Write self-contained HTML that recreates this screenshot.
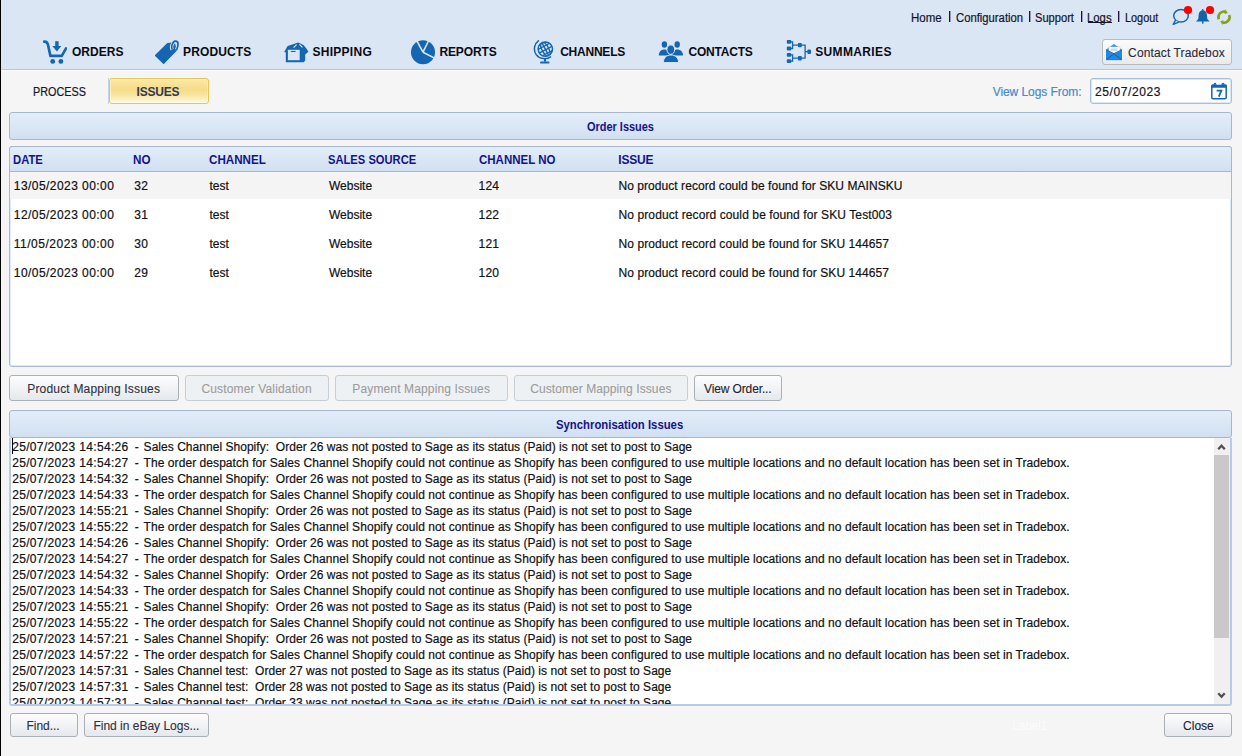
<!DOCTYPE html>
<html><head><meta charset="utf-8">
<style>
*{box-sizing:border-box;margin:0;padding:0}
html,body{width:1242px;height:756px;overflow:hidden;background:#f5f5f5;font-family:"Liberation Sans",sans-serif;font-size:12px;position:relative}
.a{position:absolute}
.t{position:absolute;white-space:pre;font-size:12px;line-height:12px;color:#111;-webkit-text-stroke:.2px currentColor}
.hdr{left:0;top:0;width:1242px;height:69px;background:#dae6f3}
.hline{left:0;top:69px;width:1242px;height:1px;background:#c2c4c6}
.hline2{left:0;top:70px;width:1242px;height:1px;background:#fbfbfb}
.lbar{left:0;top:0;width:1px;height:756px;background:#000}
.bar{background:linear-gradient(#e2edf9,#d1e0f1);border:1px solid #a6b6cd;border-radius:3px}
.btn{background:linear-gradient(#fdfdfe,#e5e8ec);border:1px solid #abb0b6;border-radius:3px}
.dis{background:#eef1f4;border:1px solid #c8ced5;border-radius:3px}
.sep{width:1px;background:#20103a;box-shadow:1px 0 0 rgba(40,20,70,.35)}
</style></head><body>
<div class="a hdr"></div>
<div class="a hline"></div>
<div class="a hline2"></div>

<!-- top separators -->
<div class="a sep" style="left:949px;top:11px;height:11px"></div>
<div class="a sep" style="left:1029px;top:11px;height:11px"></div>
<div class="a sep" style="left:1081px;top:11px;height:11px"></div>
<div class="a sep" style="left:1118px;top:11px;height:11px"></div>
<div class="a" style="left:1088px;top:22px;width:24px;height:1px;background:#15152a"></div>

<!-- top right icons -->
<svg class="a" style="left:1170px;top:4px" width="70" height="24" viewBox="0 0 70 24">
  <ellipse cx="11" cy="11.8" rx="7.3" ry="6.3" fill="none" stroke="#1566b2" stroke-width="1.5"/>
  <path d="M5.6 16.2L3.2 20.4L8.8 18.2" fill="#dae6f3" stroke="#1566b2" stroke-width="1.4" stroke-linejoin="round"/>
  <circle cx="18" cy="6" r="4.1" fill="#f00"/>
  <path d="M32.7 6.2c-2.6 0-3.9 2.4-4.1 5.2l-.3 3.6L26 17.4h13.6l-2.3-2.4-.3-3.6c-.2-2.8-1.5-5.2-4.3-5.2z" fill="#1262ac"/>
  <rect x="32" y="5" width="1.4" height="1.8" rx=".5" fill="#1262ac"/>
  <rect x="32" y="17.2" width="1.5" height="2.4" fill="#1262ac"/>
  <circle cx="40" cy="6" r="4.1" fill="#f00"/>
  <path d="M48.81 15.20A5.6 5.6 0 0 1 55.16 7.62" fill="none" stroke="#86a01e" stroke-width="2.6"/>
  <path d="M54.56 9.95L55.39 5.22L57.75 8.94z" fill="#86a01e"/>
  <path d="M59.19 11.00A5.6 5.6 0 0 1 52.84 18.58" fill="none" stroke="#86a01e" stroke-width="2.6"/>
  <path d="M53.44 16.25L52.61 20.98L50.25 17.26z" fill="#86a01e"/>
</svg>

<!-- nav icons -->
<svg class="a" style="left:43px;top:40px" width="24" height="24" viewBox="0 0 24 24">
  <path d="M1.2 1.6C3.4 1.4 4.4 2.3 4.9 4.4L7.4 15.9H18.8L23 8.3" fill="none" stroke="#1566b2" stroke-width="2.6" stroke-linecap="round" stroke-linejoin="round"/>
  <rect x="12.2" y="1.2" width="3.4" height="5.4" fill="#1566b2"/>
  <path d="M9.3 6.1H18.3L13.9 11.4z" fill="#1566b2"/>
  <circle cx="9.7" cy="21.4" r="2.4" fill="#1566b2"/>
  <circle cx="17.9" cy="21.4" r="2.4" fill="#1566b2"/>
</svg>
<svg class="a" style="left:155px;top:40px" width="26" height="25" viewBox="0 0 26 25">
  <path d="M0.6 15.6L12.8 3.6L19.2 3L21.2 10.2L8.6 23.2Z" fill="#1566b2" stroke="#1566b2" stroke-width="1.4" stroke-linejoin="round"/>
  <path d="M17.2 9.6C15.6 7 17.6 1.4 20.4 1.2C23.4 1 24 4.6 21.6 9.8" fill="none" stroke="#dae6f3" stroke-width="3.4"/>
  <path d="M17.2 9.6C15.6 7 17.6 1.4 20.4 1.2C23.4 1 24 4.6 21.6 9.8" fill="none" stroke="#1566b2" stroke-width="1.7"/>
</svg>
<svg class="a" style="left:284px;top:40px" width="26" height="24" viewBox="0 0 26 24">
  <path d="M0.2 12L3.6 6L9 4.2L14.2 2.6L19.5 5L22.4 8.6L24.4 11.8L21.2 14.5V20.6L19.8 22.2H1.8V12.6Z" fill="#1566b2"/>
  <rect x="3.9" y="9.8" width="11.8" height="10.4" fill="#dae6f3"/>
  <rect x="6.8" y="10.9" width="4.8" height="1.1" fill="#1566b2"/>
  <path d="M9.6 7.6L12.6 4.6M15.4 4.4L18.4 7.4" stroke="#dae6f3" stroke-width="1.1"/>
</svg>
<svg class="a" style="left:411px;top:40px" width="25" height="25" viewBox="0 0 25 25">
  <circle cx="12" cy="12.2" r="12" fill="#1566b2"/>
  <path d="M12.0 12.2L5.80 0.78" stroke="#dae6f3" stroke-width="1.6"/><path d="M12.0 12.2L17.70 0.52" stroke="#dae6f3" stroke-width="1.6"/><path d="M12.0 12.2L23.58 18.10" stroke="#dae6f3" stroke-width="1.6"/>
</svg>
<svg class="a" style="left:533px;top:40px" width="22" height="25" viewBox="0 0 22 25">
  <defs><clipPath id="gc"><circle cx="12.3" cy="9.1" r="7"/></clipPath></defs>
  <circle cx="12.3" cy="9.1" r="7.4" fill="#1566b2"/>
  <g clip-path="url(#gc)" transform="rotate(-28 12.3 9.1)">
    <g fill="#dae6f3">
      <rect x="5" y="3.2" width="15" height="2.2"/>
      <rect x="5" y="6.6" width="15" height="2.6"/>
      <rect x="5" y="10.4" width="15" height="2.6"/>
      <rect x="5" y="14.2" width="15" height="2.2"/>
    </g>
    <ellipse cx="12.3" cy="9.1" rx="3.4" ry="8" fill="none" stroke="#1566b2" stroke-width="1.4"/>
    <rect x="11.6" y="0" width="1.4" height="18" fill="#1566b2"/>
  </g>
  <circle cx="12.3" cy="9.1" r="7.2" fill="none" stroke="#1566b2" stroke-width="1.5"/>
  <path d="M5.9 0.4C1.6 3.4 -0.2 9.6 3.2 14.6C6.6 19.4 13.6 19.8 18 16.6" fill="none" stroke="#1566b2" stroke-width="1.5"/>
  <rect x="11" y="18" width="2" height="3.6" fill="#1566b2"/>
  <rect x="7.2" y="21.4" width="9.2" height="2.2" rx=".5" fill="#1566b2"/>
</svg>
<svg class="a" style="left:658px;top:40px" width="26" height="24" viewBox="0 0 26 24">
  <ellipse cx="6.4" cy="4.5" rx="2.7" ry="3.2" fill="#1566b2"/>
  <path d="M0.8 15.4C0.8 11.5 3.2 9.4 6.4 9.4C9.6 9.4 12 11.5 12 15.4z" fill="#1566b2"/>
  <ellipse cx="19.2" cy="4.5" rx="2.7" ry="3.2" fill="#1566b2"/>
  <path d="M13.6 15.4C13.6 11.5 16 9.4 19.2 9.4C22.4 9.4 25 11.5 25 15.4z" fill="#1566b2"/>
  <ellipse cx="12.8" cy="9.6" rx="3.9" ry="4.7" fill="#1566b2" stroke="#dae6f3" stroke-width="1"/>
  <path d="M5.4 22.6C5.4 17.6 8.6 15 12.9 15C17.2 15 20.6 17.6 20.6 22.6z" fill="#1566b2" stroke="#dae6f3" stroke-width="1"/>
</svg>
<svg class="a" style="left:786px;top:40px" width="26" height="25" viewBox="0 0 26 25">
  <path d="M4 1.8H6.6V8.5H4M6.6 5.1H12.5M4 14.8H6.6V21.1H4M6.6 18.2H12.5M15 5.1H19.1V18.2H15M19.1 11.6H22" fill="none" stroke="#1566b2" stroke-width="1.3"/>
  <g fill="#1566b2">
  <rect x="0.8" y="-0.1" width="4.4" height="3.9" rx="1"/>
  <rect x="0.8" y="6.6" width="4.4" height="3.9" rx="1"/>
  <rect x="0.8" y="12.9" width="4.4" height="3.9" rx="1"/>
  <rect x="0.8" y="19.2" width="4.4" height="3.9" rx="1"/>
  <rect x="11.9" y="2.9" width="3.9" height="4.4" rx="1"/>
  <rect x="11.9" y="16" width="3.9" height="4.4" rx="1"/>
  <rect x="21.4" y="9.5" width="3.6" height="4.4" rx="1"/>
  </g>
</svg>

<!-- contact tradebox -->
<div class="a btn" style="left:1102px;top:39px;width:130px;height:26px;background:linear-gradient(#fbfbfb,#e9eaeb);border-color:#b9bcbf"></div>
<svg class="a" style="left:1105px;top:43px" width="18" height="18" viewBox="0 0 18 18">
  <path d="M1.1 6.6L8.9 0.9L16.9 6.6V17H1.1z" fill="#2f9ae8"/>
  <path d="M3.8 3.9H15V10.4L12.5 10L10.6 11L8.9 10L7 11L3.8 10.2z" fill="#fff" stroke="#c6cbd2" stroke-width=".5"/>
  <rect x="5.6" y="5.4" width="7" height="2.8" fill="#d5dde6"/>
  <path d="M1.1 7L8.9 11L16.9 7V17H1.1z" fill="#1f8ae2"/>
  <path d="M1.1 6.8L8.9 10.6L16.9 6.8M1.4 16.6L8.9 10.9L16.6 16.6" fill="none" stroke="#0d5cb0" stroke-width=".9"/>
  <path d="M1.1 16.8H16.9" stroke="#1a7ad6" stroke-width=".6"/>
</svg>

<!-- tabs -->
<div class="a" style="left:108px;top:78px;width:1px;height:26px;background:#c7d3e2"></div>
<div class="a" style="left:109px;top:78px;width:100px;height:26px;border:1px solid #e6c458;border-radius:3px;background:linear-gradient(#fbe9a8 0%,#f6db88 45%,#f9e6a6 70%,#fff9e0 100%);box-shadow:inset 0 0 0 1px rgba(255,255,255,.45)"></div>

<div class="a" style="left:1090px;top:78px;width:142px;height:26px;background:#fff;border:1px solid #a6bedf;border-radius:3px;box-shadow:inset 0 0 0 1px #dce7f5"></div>
<svg class="a" style="left:1210px;top:82px" width="18" height="18" viewBox="0 0 18 18">
  <rect x="1.8" y="3.2" width="14.4" height="13.6" rx="1.2" fill="none" stroke="#1566b2" stroke-width="1.5"/>
  <rect x="1.2" y="2.6" width="15.6" height="3.2" rx="1" fill="#1566b2"/>
  <path d="M4.3 4V2.2a.9.9 0 0 1 1.8 0V4M12.1 4V2.2a.9.9 0 0 1 1.8 0V4" fill="none" stroke="#1566b2" stroke-width="1.1"/>
  <rect x="6.3" y="1" width="5" height="1.6" fill="#fff"/>
  <path d="M6.6 8.6h4.8l-2.6 6" fill="none" stroke="#1566b2" stroke-width="1.8"/>
</svg>

<!-- order issues bar -->
<div class="a bar" style="left:9px;top:112px;width:1223px;height:28px"></div>
<!-- table -->
<div class="a" style="left:9px;top:146px;width:1223px;height:221px;background:#fff;border:1px solid #a7b8d0;border-radius:3px;box-shadow:inset 0 0 0 1px #dfe9f5"></div>
<div class="a bar" style="left:9px;top:146px;width:1223px;height:26px;border-radius:3px 3px 0 0"></div>
<div class="a" style="left:10px;top:172px;width:1221px;height:27px;background:#f4f4f4"></div>

<!-- buttons -->
<div class="a btn" style="left:9px;top:375px;width:170px;height:26px"></div>
<div class="a dis" style="left:185px;top:375px;width:144px;height:26px"></div>
<div class="a dis" style="left:335px;top:375px;width:173px;height:26px"></div>
<div class="a dis" style="left:514px;top:375px;width:174px;height:26px"></div>
<div class="a btn" style="left:694px;top:375px;width:88px;height:26px"></div>

<!-- sync bar -->
<div class="a bar" style="left:9px;top:410px;width:1223px;height:28px"></div>
<!-- log area -->
<div class="a" style="left:9px;top:438px;width:1223px;height:268px;background:#fff;border:2px solid #b7cbe6;border-top:0;border-radius:0 0 3px 3px;overflow:hidden">
<div class="a" style="left:0;top:0;width:1219px;height:266px;overflow:hidden">
<div class="t" style="left:1.20px;top:3px;letter-spacing:0.333px">25/07/2023 14:54:26</div><div class="t" style="left:123.70px;top:3px">-</div><div class="t" style="left:132.60px;top:3px;letter-spacing:0.034px">Sales Channel Shopify:  Order 26 was not posted to Sage as its status (Paid) is not set to post to Sage</div>
<div class="t" style="left:1.20px;top:19px;letter-spacing:0.333px">25/07/2023 14:54:27</div><div class="t" style="left:123.70px;top:19px">-</div><div class="t" style="left:132.60px;top:19px;letter-spacing:0.064px">The order despatch for Sales Channel Shopify could not continue as Shopify has been configured to use multiple locations and no default location has been set in Tradebox.</div>
<div class="t" style="left:1.20px;top:35px;letter-spacing:0.333px">25/07/2023 14:54:32</div><div class="t" style="left:123.70px;top:35px">-</div><div class="t" style="left:132.60px;top:35px;letter-spacing:0.034px">Sales Channel Shopify:  Order 26 was not posted to Sage as its status (Paid) is not set to post to Sage</div>
<div class="t" style="left:1.20px;top:51px;letter-spacing:0.333px">25/07/2023 14:54:33</div><div class="t" style="left:123.70px;top:51px">-</div><div class="t" style="left:132.60px;top:51px;letter-spacing:0.064px">The order despatch for Sales Channel Shopify could not continue as Shopify has been configured to use multiple locations and no default location has been set in Tradebox.</div>
<div class="t" style="left:1.20px;top:67px;letter-spacing:0.333px">25/07/2023 14:55:21</div><div class="t" style="left:123.70px;top:67px">-</div><div class="t" style="left:132.60px;top:67px;letter-spacing:0.034px">Sales Channel Shopify:  Order 26 was not posted to Sage as its status (Paid) is not set to post to Sage</div>
<div class="t" style="left:1.20px;top:83px;letter-spacing:0.333px">25/07/2023 14:55:22</div><div class="t" style="left:123.70px;top:83px">-</div><div class="t" style="left:132.60px;top:83px;letter-spacing:0.064px">The order despatch for Sales Channel Shopify could not continue as Shopify has been configured to use multiple locations and no default location has been set in Tradebox.</div>
<div class="t" style="left:1.20px;top:99px;letter-spacing:0.333px">25/07/2023 14:54:26</div><div class="t" style="left:123.70px;top:99px">-</div><div class="t" style="left:132.60px;top:99px;letter-spacing:0.034px">Sales Channel Shopify:  Order 26 was not posted to Sage as its status (Paid) is not set to post to Sage</div>
<div class="t" style="left:1.20px;top:115px;letter-spacing:0.333px">25/07/2023 14:54:27</div><div class="t" style="left:123.70px;top:115px">-</div><div class="t" style="left:132.60px;top:115px;letter-spacing:0.064px">The order despatch for Sales Channel Shopify could not continue as Shopify has been configured to use multiple locations and no default location has been set in Tradebox.</div>
<div class="t" style="left:1.20px;top:131px;letter-spacing:0.333px">25/07/2023 14:54:32</div><div class="t" style="left:123.70px;top:131px">-</div><div class="t" style="left:132.60px;top:131px;letter-spacing:0.034px">Sales Channel Shopify:  Order 26 was not posted to Sage as its status (Paid) is not set to post to Sage</div>
<div class="t" style="left:1.20px;top:147px;letter-spacing:0.333px">25/07/2023 14:54:33</div><div class="t" style="left:123.70px;top:147px">-</div><div class="t" style="left:132.60px;top:147px;letter-spacing:0.064px">The order despatch for Sales Channel Shopify could not continue as Shopify has been configured to use multiple locations and no default location has been set in Tradebox.</div>
<div class="t" style="left:1.20px;top:163px;letter-spacing:0.333px">25/07/2023 14:55:21</div><div class="t" style="left:123.70px;top:163px">-</div><div class="t" style="left:132.60px;top:163px;letter-spacing:0.034px">Sales Channel Shopify:  Order 26 was not posted to Sage as its status (Paid) is not set to post to Sage</div>
<div class="t" style="left:1.20px;top:179px;letter-spacing:0.333px">25/07/2023 14:55:22</div><div class="t" style="left:123.70px;top:179px">-</div><div class="t" style="left:132.60px;top:179px;letter-spacing:0.064px">The order despatch for Sales Channel Shopify could not continue as Shopify has been configured to use multiple locations and no default location has been set in Tradebox.</div>
<div class="t" style="left:1.20px;top:195px;letter-spacing:0.333px">25/07/2023 14:57:21</div><div class="t" style="left:123.70px;top:195px">-</div><div class="t" style="left:132.60px;top:195px;letter-spacing:0.034px">Sales Channel Shopify:  Order 26 was not posted to Sage as its status (Paid) is not set to post to Sage</div>
<div class="t" style="left:1.20px;top:211px;letter-spacing:0.333px">25/07/2023 14:57:22</div><div class="t" style="left:123.70px;top:211px">-</div><div class="t" style="left:132.60px;top:211px;letter-spacing:0.064px">The order despatch for Sales Channel Shopify could not continue as Shopify has been configured to use multiple locations and no default location has been set in Tradebox.</div>
<div class="t" style="left:1.20px;top:227px;letter-spacing:0.333px">25/07/2023 14:57:31</div><div class="t" style="left:123.70px;top:227px">-</div><div class="t" style="left:132.60px;top:227px;letter-spacing:0.034px">Sales Channel test:  Order 27 was not posted to Sage as its status (Paid) is not set to post to Sage</div>
<div class="t" style="left:1.20px;top:243px;letter-spacing:0.333px">25/07/2023 14:57:31</div><div class="t" style="left:123.70px;top:243px">-</div><div class="t" style="left:132.60px;top:243px;letter-spacing:0.034px">Sales Channel test:  Order 28 was not posted to Sage as its status (Paid) is not set to post to Sage</div>
<div class="t" style="left:1.20px;top:259px;letter-spacing:0.333px">25/07/2023 14:57:31</div><div class="t" style="left:123.70px;top:259px">-</div><div class="t" style="left:132.60px;top:259px;letter-spacing:0.034px">Sales Channel test:  Order 33 was not posted to Sage as its status (Paid) is not set to post to Sage</div>
</div>
</div>
<div class="a" style="left:12px;top:438px;width:1px;height:16px;background:#000"></div>
<!-- scrollbar -->
<div class="a" style="left:1214px;top:438px;width:16px;height:266px;background:#f0f0f0"></div>
<div class="a" style="left:1214px;top:455px;width:15px;height:183px;background:#c9c9c9"></div>
<svg class="a" style="left:1216px;top:441px" width="12" height="10" viewBox="0 0 12 10"><path d="M2.2 8.2L5.5 4.6L8.8 8.2" fill="none" stroke="#505050" stroke-width="2.3"/></svg>
<svg class="a" style="left:1216px;top:690px" width="12" height="10" viewBox="0 0 12 10"><path d="M2.3 3.2L5.5 6.8L8.7 3.2" fill="none" stroke="#505050" stroke-width="2.3"/></svg>

<!-- bottom buttons -->
<div class="a btn" style="left:10px;top:713px;width:68px;height:24px"></div>
<div class="a btn" style="left:84px;top:713px;width:125px;height:24px"></div>
<div class="a btn" style="left:1164px;top:713px;width:68px;height:24px"></div>

<div class="a lbar"></div>
<div class="t" style="left:911.24px;top:12px;transform:scaleX(0.9581);transform-origin:0 0;color:#15152a;">Home</div>
<div class="t" style="left:956.30px;top:12px;transform:scaleX(0.9394);transform-origin:0 0;color:#15152a;">Configuration</div>
<div class="t" style="left:1035.37px;top:12px;transform:scaleX(0.9268);transform-origin:0 0;color:#15152a;">Support</div>
<div class="t" style="left:1087.26px;top:12px;transform:scaleX(0.9440);transform-origin:0 0;color:#15152a;">Logs</div>
<div class="t" style="left:1124.79px;top:12px;transform:scaleX(0.9056);transform-origin:0 0;color:#15152a;">Logout</div>
<div class="t" style="left:72.00px;top:46px;letter-spacing:0.040px;font-weight:bold;-webkit-text-stroke:0;color:#0a0a14;">ORDERS</div>
<div class="t" style="left:183.10px;top:46px;letter-spacing:0.129px;font-weight:bold;-webkit-text-stroke:0;color:#0a0a14;">PRODUCTS</div>
<div class="t" style="left:312.40px;top:46px;letter-spacing:0.286px;font-weight:bold;-webkit-text-stroke:0;color:#0a0a14;">SHIPPING</div>
<div class="t" style="left:439.40px;top:46px;letter-spacing:-0.100px;font-weight:bold;-webkit-text-stroke:0;color:#0a0a14;">REPORTS</div>
<div class="t" style="left:560.20px;top:46px;letter-spacing:-0.229px;font-weight:bold;-webkit-text-stroke:0;color:#0a0a14;">CHANNELS</div>
<div class="t" style="left:688.50px;top:46px;letter-spacing:-0.200px;font-weight:bold;-webkit-text-stroke:0;color:#0a0a14;">CONTACTS</div>
<div class="t" style="left:815.20px;top:46px;letter-spacing:0.362px;font-weight:bold;-webkit-text-stroke:0;color:#0a0a14;">SUMMARIES</div>
<div class="t" style="left:1128.10px;top:47px;letter-spacing:0.127px;color:#2a2a3a;-webkit-text-stroke:.1px currentColor">Contact Tradebox</div>
<div class="t" style="left:32.80px;top:86px;transform:scaleX(0.9017);transform-origin:0 0;color:#15152a;">PROCESS</div>
<div class="t" style="left:136.60px;top:86px;letter-spacing:-0.240px;font-weight:bold;-webkit-text-stroke:0;color:#2c3b57;">ISSUES</div>
<div class="t" style="left:992.70px;top:86px;letter-spacing:-0.064px;color:#4a8cc6;">View Logs From:</div>
<div class="t" style="left:1095.00px;top:86px;letter-spacing:0.600px;color:#15152a;">25/07/2023</div>
<div class="t" style="left:587.40px;top:121px;transform:scaleX(0.9123);transform-origin:0 0;font-weight:bold;-webkit-text-stroke:0;color:#14148a;">Order Issues</div>
<div class="t" style="left:556.46px;top:419px;transform:scaleX(0.9444);transform-origin:0 0;font-weight:bold;-webkit-text-stroke:0;color:#14148a;">Synchronisation Issues</div>
<div class="t" style="left:13.26px;top:154px;transform:scaleX(0.9387);transform-origin:0 0;font-weight:bold;-webkit-text-stroke:0;color:#14148a;">DATE</div>
<div class="t" style="left:133.43px;top:154px;transform:scaleX(0.9706);transform-origin:0 0;font-weight:bold;-webkit-text-stroke:0;color:#14148a;">NO</div>
<div class="t" style="left:209.20px;top:154px;transform:scaleX(0.9690);transform-origin:0 0;font-weight:bold;-webkit-text-stroke:0;color:#14148a;">CHANNEL</div>
<div class="t" style="left:328.07px;top:154px;transform:scaleX(0.9319);transform-origin:0 0;font-weight:bold;-webkit-text-stroke:0;color:#14148a;">SALES SOURCE</div>
<div class="t" style="left:479.20px;top:154px;transform:scaleX(0.9575);transform-origin:0 0;font-weight:bold;-webkit-text-stroke:0;color:#14148a;">CHANNEL NO</div>
<div class="t" style="left:618.30px;top:154px;letter-spacing:-0.175px;font-weight:bold;-webkit-text-stroke:0;color:#14148a;">ISSUE</div>
<div class="t" style="left:13.80px;top:180px;letter-spacing:0.440px;color:#111;">13/05/2023 00:00</div>
<div class="t" style="left:134.30px;top:180px;letter-spacing:0.200px;color:#111;">32</div>
<div class="t" style="left:209.40px;top:180px;letter-spacing:0.033px;color:#111;">test</div>
<div class="t" style="left:328.90px;top:180px;letter-spacing:0.017px;color:#111;">Website</div>
<div class="t" style="left:478.60px;top:180px;letter-spacing:0.200px;color:#111;">124</div>
<div class="t" style="left:618.50px;top:180px;letter-spacing:0.053px;color:#111;">No product record could be found for SKU MAINSKU</div>
<div class="t" style="left:13.80px;top:209px;letter-spacing:0.440px;color:#111;">12/05/2023 00:00</div>
<div class="t" style="left:134.30px;top:209px;letter-spacing:0.200px;color:#111;">31</div>
<div class="t" style="left:209.40px;top:209px;letter-spacing:0.033px;color:#111;">test</div>
<div class="t" style="left:328.90px;top:209px;letter-spacing:0.017px;color:#111;">Website</div>
<div class="t" style="left:478.60px;top:209px;letter-spacing:0.200px;color:#111;">122</div>
<div class="t" style="left:618.50px;top:209px;letter-spacing:0.102px;color:#111;">No product record could be found for SKU Test003</div>
<div class="t" style="left:13.80px;top:238px;letter-spacing:0.507px;color:#111;">11/05/2023 00:00</div>
<div class="t" style="left:134.30px;top:238px;letter-spacing:0.200px;color:#111;">30</div>
<div class="t" style="left:209.40px;top:238px;letter-spacing:0.033px;color:#111;">test</div>
<div class="t" style="left:328.90px;top:238px;letter-spacing:0.017px;color:#111;">Website</div>
<div class="t" style="left:478.60px;top:238px;letter-spacing:0.200px;color:#111;">121</div>
<div class="t" style="left:618.50px;top:238px;letter-spacing:0.080px;color:#111;">No product record could be found for SKU 144657</div>
<div class="t" style="left:13.80px;top:267px;letter-spacing:0.440px;color:#111;">10/05/2023 00:00</div>
<div class="t" style="left:134.30px;top:267px;letter-spacing:0.200px;color:#111;">29</div>
<div class="t" style="left:209.40px;top:267px;letter-spacing:0.033px;color:#111;">test</div>
<div class="t" style="left:328.90px;top:267px;letter-spacing:0.017px;color:#111;">Website</div>
<div class="t" style="left:478.60px;top:267px;letter-spacing:0.200px;color:#111;">120</div>
<div class="t" style="left:618.50px;top:267px;letter-spacing:0.080px;color:#111;">No product record could be found for SKU 144657</div>
<div class="t" style="left:27.20px;top:383px;letter-spacing:0.190px;color:#30303c;-webkit-text-stroke:.1px currentColor">Product Mapping Issues</div>
<div class="t" style="left:201.40px;top:383px;letter-spacing:0.167px;color:#9c9c9c;-webkit-text-stroke:.1px currentColor">Customer Validation</div>
<div class="t" style="left:352.30px;top:383px;letter-spacing:0.138px;color:#9c9c9c;-webkit-text-stroke:.1px currentColor">Payment Mapping Issues</div>
<div class="t" style="left:530.20px;top:383px;letter-spacing:0.082px;color:#9c9c9c;-webkit-text-stroke:.1px currentColor">Customer Mapping Issues</div>
<div class="t" style="left:704.10px;top:383px;letter-spacing:-0.133px;color:#222230;-webkit-text-stroke:.1px currentColor">View Order...</div>
<div class="t" style="left:26.50px;top:720px;letter-spacing:-0.033px;color:#30303c;-webkit-text-stroke:.1px currentColor">Find...</div>
<div class="t" style="left:93.40px;top:720px;letter-spacing:0.000px;color:#30303c;-webkit-text-stroke:.1px currentColor">Find in eBay Logs...</div>
<div class="t" style="left:1183.10px;top:720px;letter-spacing:0.000px;color:#222230;-webkit-text-stroke:.1px currentColor">Close</div>
<div class="t" style="left:1012.30px;top:720px;letter-spacing:-0.180px;color:#fcfcfc;-webkit-text-stroke:0">Label1</div>
</body></html>
